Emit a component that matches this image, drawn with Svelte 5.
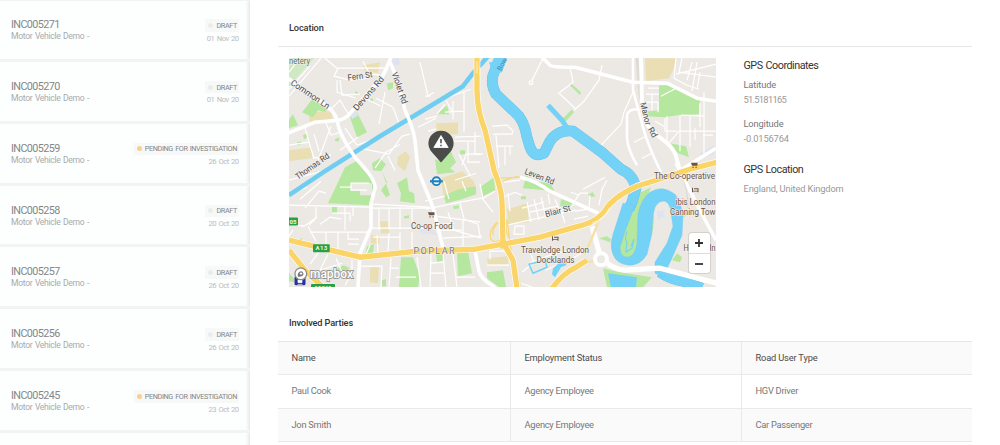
<script>
  const incidents = [
    { id: 'INC005271', status: 'DRAFT', date: '01 Nov 20' },
    { id: 'INC005270', status: 'DRAFT', date: '01 Nov 20' },
    { id: 'INC005259', status: 'PENDING FOR INVESTIGATION', date: '26 Oct 20' },
    { id: 'INC005258', status: 'DRAFT', date: '20 Oct 20' },
    { id: 'INC005257', status: 'DRAFT', date: '26 Oct 20' },
    { id: 'INC005256', status: 'DRAFT', date: '26 Oct 20' },
    { id: 'INC005245', status: 'PENDING FOR INVESTIGATION', date: '23 Oct 20' }
  ]

  const parties = [
    { name: 'Paul Cook', employment: 'Agency Employee', type: 'HGV Driver' },
    { name: 'Jon Smith', employment: 'Agency Employee', type: 'Car Passenger' }
  ]

  // map layers
  const parks = [
    'M302 112L313 98 323 105 328 108 325 112 318 110 313 117Z',
    'M289 119L293 114 298 125 289 128Z',
    'M350 117L357 112 367 132 357 137Z',
    'M387 83L393 82 393 88 388 90Z',
    'M297 142l4 -1v3l-4 1zM303 135l4 -2v4l-3 2zM335 139l4 -2v4l-4 0zM355 91l3 1v2l-3-1zM370 99l3-1v3h-3z',
    'M372 163L380 158 386 164 381 171 373 170Z',
    'M345 167L356 161 369 171 375 188 371 205 328 203 338 182Z',
    'M382 171L387 182 381 190 386 197 390 195ZM397 183L407 177 409 191 414 193 415 203 400 201 401 193Z',
    'M332 206h5v7h-5zM404 216l5-1v3h-5zM298 239l4-1v3h-4z',
    'M365 254L367 246 374 244 373 254Z',
    'M401 257L413 257 420 275 418 287 399 287Z',
    'M436 253L443 250 444 260 437 262ZM457 253L468 251 472 273 458 276Z',
    'M487 272L503 270 506 287 499 287 487 278Z',
    'M444 195L459 189 476 186 476 194 462 199 446 203Z',
    'M480 187L494 177 495 190 483 196Z',
    'M435 159L441 161 450 149 456 162 450 168 455 172 437 174Z',
    'M437 114L447 105 449 114ZM460 150l5 0v4h-5zM453 206l6-1v3l-5 1z',
    'M523 188L526 175 537 182 550 182 555 192 545 190Z',
    'M521 196l5 0v3h-5zM561 199L575 203 575 206 560 206Z',
    'M659 85L673 85 687 95 700 100 699 114 677 115 665 117 647 116 648 111 659 110Z',
    'M669 143L686 146 689 157 678 153Z',
    'M637 194L651 187 645 202 640 220 640 250 628 259 617 251 624 230Z',
    'M603 268L620 272 652 277 643 287 607 287Z',
    'M672 260L677 253 682 257 680 262ZM599 238l8-2 4 3-1 3zM588 194l5-2 2 4-5 1z',
    'M562 119L572 109 574 112 565 122ZM571 83l10 9-1 3-10-10z',
    'M651 212l3 5-1 12-4 9zM681 208l7 6-5 3zM289 273l5 5v4l-5-1z',
    'M331 271l13-6 6 3-8 4zM382 280l4-1v7h-4z'
  ]
  const sand = [
    'M308 112L332 111 332 121 310 124Z',
    'M363 65L380 62 378 73 364 71Z',
    'M289 150L312 147 312 158 289 161Z',
    'M398 156L406 151 410 157 405 171 397 165Z',
    'M436 123L458 122 458 134 437 134Z',
    'M441 178L462 171 474 181 475 187 458 190 444 200Z',
    'M507 209L527 203 529 222 508 224Z',
    'M487 258L508 256 508 264 488 265Z',
    'M380 221L389 221 389 233 381 233ZM371 235L380 236 379 244 371 243Z',
    'M370 267L379 267 378 283 370 282Z',
    'M645 58L676 58 673 70 669 78 646 81Z'
  ]
  const streets = [
    // north west
    'M289 96L321 58M289 89L310 66M300 58L289 72M325 58L337 68 389 68M338 68L334 76 350 80 368 78M340 80L342 95 360 94M337 80V92L356 98M363 61L369 73 383 76M420 62L428 96 434 92M332 108L340 100 348 113',
    'M289 145L309 142 314 158 331 155M309 142L305 128M314 134L319 151M331 126L317 163M325 120L331 135 340 132M345 128L357 145 378 137M357 145L368 141M340 150L358 137M360 148L389 154 402 136 410 134M375 168L386 152 400 144M395 170L388 156M418 127L436 118M385 92L379 124M376 98L393 107 399 123M365 98L381 106',
    // north centre
    'M434 102L471 89M437 114L445 104M464 91V132M453 101V119M445 112L464 111M446 100L452 111M425 119L437 116M428 131L436 129M425 96L430 96M475 132V154H483M455 137L481 136M459 154L470 175M468 142V162H480M492 126L507 125 513 131 512 134H493M496 135L499 168M505 146V165M496 146H513M475 141H454',
    'M462 165L466 154 480 154M510 155V146',
    // north east
    'M543 58L532 80M558 92L575 108M570 67L573 82 560 92M602 65L599 80 584 101 574 110M633 92L624 112 621 124 601 145M676 58L674 78 687 85 699 89M682 58L679 72 716 77M692 62L687 80M700 72L697 89M716 64L676 74M692 91L697 62',
    'M646 94H659M652 94V110M658 112V102H646M665 118V131H677M667 116V144M680 115V151M690 115V147M700 103V127M704 92V128M679 131H716M668 144L679 131M655 121L664 126M681 115L704 116V154M695 128V140M703 135H713M648 88H659M634 142L646 136M642 158L652 153M676 88L661 96',
    // west
    'M289 180L326 170M289 193L307 187M300 199L321 181M305 208L319 191 326 193M289 205L371 207M316 207V218L309 225M320 224L330 217 341 219M289 224L304 226 317 217M332 213L350 213 350 221M353 207V216M345 207V230M310 232H370M308 226L316 241M293 230L289 236M326 232V249M338 232V252M348 232V239H359M348 244H359M371 228H428M379 208V230M389 209V229M400 207V229M412 208V229M371 208H430M367 190H351V183H369M340 187H352M372 204L430 207',
    'M320 250L310 264M328 254L320 270 342 263M336 258L343 274 355 270M352 260V273L345 285M330 273H341M309 271L325 278M360 266H382L381 287M391 258L389 287M370 245L365 256M377 235L378 253M389 233L388 252M373 237H400M400 232V251M412 232V249M396 277H416M390 268H399M417 257L421 287M431 254L430 287M443 254L446 287M453 254L457 287M431 273H445M456 277H475M430 263L443 262',
    // centre
    'M426 209L460 202 482 198 493 212M425 201L445 196M444 181L449 199M462 181L466 191M480 184L483 198 495 191M455 180L476 173M460 203L464 219 478 224 480 236M436 216L480 222M448 212L454 230 481 238M437 230H462M433 225L454 223M443 238L482 236M463 220V246',
    'M504 182L520 180M503 197L515 192 522 195M510 211L508 193M527 202L531 222M534 199L539 220M541 197L546 218M548 194L550 204M555 199L560 211 576 204M515 226H524V234H514ZM507 225L575 210M530 212L558 206M575 211L588 209M522 208L544 202M560 207L565 223M574 219L588 216',
    'M528 247L534 262 522 272M530 262L550 255 571 250M508 251H490V259M487 265H509M521 283L533 287M545 270L557 265M573 258L589 248M583 189L605 177M572 205L580 193 588 193M589 208L590 195M599 205L602 189 607 180M579 195L571 192'
  ]
  const roads = [
    'M288 133L315 122 338 120Q346 119 351 112L382 77Q385 72 391 57',
    'M288 78L327 106Q337 114 338 124 340 135 355 157L368 172Q376 183 375 188L371 203V227L360 253 358 287',
    'M389 60Q396 73 405 110 413 127 415 140L418 170 433 207 443 248',
    'M475 250L479 271Q481 279 495 287',
    'M542 57L550 65Q552 67 575 67L633 82 667 83 697 98 716 101',
    'M520 177Q535 180 550 191L598 213',
    'M716 148L682 169M676 163L700 210 716 240'
  ]
  const yellowRoads = [
    'M289 240L360 257Q390 254 415 251L475 249 503 244 540 237 575 227Q598 222 606 209 613 197 637 186L690 169 717 162',
    'M477 57V90Q477 110 485 130L494 170Q502 190 502 202L503 242 513 260 517 288',
    'M289 250L305 270 323 287',
    'M552 288Q563 273 576 267L587 260'
  ]
  // the Lea, then its loops round the island
  const river = 'M500 57L495 70Q489 82 496 94L515 112Q524 119 527 137L530 147Q534 158 544 153L550 141Q558 129 573 131L603 153 621 169Q633 174 636 188L632 202 629 209M660 272Q670 279 683 281L702 288'
  const riverLoop = 'M623 203L613 234Q610 243 612 251 615 264 629 265 641 265 647 254L652 233Q652 216 655 207 659 200 665 201 670 203 671 212L673 226 667 243 655 262 655 273 664 277 668 266 671 260 682 235 683 215Q680 200 675 194 662 184 650 192 641 199 638 214L637 243Q635 256 628 257 620 257 620 247L625 231 635 205Z'
  const canal = 'M289 195L325 171 380 136 435 103 463 86 473 73 489 55'

  const labels = [
    { t: 'netery', x: 289, y: 64, w: 21, green: true },
    { t: 'Fern St', x: 348, y: 80.5, w: 25, r: -8 },
    { t: 'Common Ln', x: 290, y: 84, w: 45, r: 34 },
    { t: 'Devons Rd', x: 357, y: 111, w: 42, r: -49 },
    { t: 'Violet Rd', x: 391.5, y: 73, w: 33, r: 71 },
    { t: 'Thomas Rd', x: 298, y: 179.5, w: 39, r: -35 },
    { t: 'Leven Rd', x: 524, y: 173.5, w: 31, r: 21 },
    { t: 'Blair St', x: 546, y: 217, w: 26, r: -15 },
    { t: 'Manor', x: 640, y: 103, w: 23, r: 76 },
    { t: 'Rd', x: 647.5, y: 129, w: 10.5, r: 60 },
    { t: 'The Co-operative', x: 654, y: 179, w: 61, brown: true },
    { t: 'ibis London', x: 675.5, y: 204.7, w: 40, brown: true },
    { t: 'Canning Tow', x: 670, y: 214.9, w: 45.5, brown: true },
    { t: 'Holiday In', x: 683.5, y: 251.2, w: 32, brown: true },
    { t: 'Travelodge London', x: 521, y: 253.2, w: 68, brown: true },
    { t: 'Docklands', x: 536.5, y: 263, w: 38, brown: true },
    { t: 'Co-op Food', x: 411, y: 229, w: 41.5, brown: true }
  ]
</script>

<div class="page">
  <aside class="incidents">
    {#each incidents as inc}
      <div class="incident">
        <div class="info">
          <div class="id">{inc.id}</div>
          <div class="desc">Motor Vehicle Demo -</div>
        </div>
        <div class="meta">
          <div class="badge">
            <span class="dot" class:pending={inc.status !== 'DRAFT'}></span>{inc.status}
          </div>
          <div class="date">{inc.date}</div>
        </div>
      </div>
    {/each}
  </aside>

  <main>
    <h2 class="location-title">Location</h2>
    <div class="location">
      <div class="map">
        <svg width="427" height="229" viewBox="289 57.8 427 229">
          <rect x="289" y="57" width="427" height="231" fill="#ece9e5" />
          <path d="M289 57H315L289 86Z" fill="#cfe9c3" />
          {#each sand as d}<path {d} fill="#eadfb4" />{/each}
          {#each parks as d}<path {d} fill="#b5e79f" />{/each}
          <path d="M351 183H372V195H360V190H351Z" fill="#ece9e5" />
          <path d="M389 58h10l1 6-9 2zM350 113l5-4 3 6-6 4zM657 211l8-1-2 4 3 3-5 0-2 4-2-4zM700 153l14-8v9l-12 3zM418 228l14 1 6 6-16-2z" fill="#dfe2ef" />

          <g fill="none" stroke-linejoin="round">
            {#each streets as d}<path {d} stroke="#fff" stroke-width="1.2" />{/each}
            <path d={canal} stroke="#6fcdf2" stroke-width="4.6" />
            <path d={river} stroke="#6ab9e6" stroke-width="10.8" />
            <path d={river} stroke="#74d2f7" stroke-width="10.2" />
            <path d={riverLoop} fill="#74d2f7" stroke="#6fc4ee" stroke-width=".4" />
            <path d="M548 105L562 120 569 131" stroke="#74d2f7" stroke-width="5" />
            <path d="M529 264l16-4 2 7-14 6z" stroke="#74d2f7" stroke-width="1.6" />
            <path d="M627 231q-3 7 0 11l-1 10 6-4 2-9-3 7" stroke="#74d2f7" stroke-width="1.1" />
          </g>
          <path d="M489 62h6l3-4h9l-5 14-9 1zM553 268l8-7 6-2-1 6-5 2-6 10-3-3zM608 273l29 4-1 10H611z" fill="#74d2f7" />

          <g fill="none" stroke-linejoin="round">
            <path d="M633 57V90L642 123Q646 141 661 172M637 165Q628 150 627 138V115Q628 109 637 109" stroke="#fff" stroke-width="2.6" />
            <path d="M637 57L640 95 649 130" stroke="#dedad6" stroke-width="3" />
            <path d="M641 57L642 103Q643 120 651 130L666 142Q675 149 677 160L680 170" stroke="#fff" stroke-width="4" />
            {#each roads as d}<path {d} stroke="#fff" stroke-width="3.6" />{/each}
            <path d="M592 226L600 255M605 261Q613 269 625 270L660 268 717 283" stroke="#fff" stroke-width="5.2" />
            <path d="M599 219Q593 238 584 254M583 264L602 258" stroke="#f7dfa6" stroke-width="2.4" />
            <path d="M681 175Q688 187 688 208" stroke="#d5d0ca" stroke-width=".8" />
            <path d="M497 222Q488 231 491 239 496 245 502 237M498 222Q492 229 493 235M507 220Q504 233 510 238M500 178L520 177M503 181Q510 178 518 176M507 219L511 250 520 285" stroke="#f9d77d" stroke-width="1.3" />
            {#each yellowRoads as d}<path {d} stroke="#fff" stroke-width="6.6" />{/each}
            {#each yellowRoads as d}<path {d} stroke="#fbd467" stroke-width="5.4" />{/each}
            <path d="M477 61v12M480 67v8M592 223Q604 219 610 207" stroke="#fff6d8" stroke-width=".9" />
          </g>
          <circle cx="503" cy="244" r="4.5" fill="#fbd467" />
          <circle cx="601" cy="259" r="6" fill="#ece9e5" stroke="#fff" stroke-width="4" />
          <circle cx="531" cy="82.5" r="1.8" fill="#ece9e5" stroke="#fff" stroke-width="1.3" />

          {#each labels as l}
            <text
              class="label"
              class:brown={l.brown}
              class:green={l.green}
              textLength={l.w}
              lengthAdjust="spacingAndGlyphs"
              transform="translate({l.x} {l.y}) rotate({l.r || 0})">{l.t}</text>
          {/each}
          <text class="water" transform="translate(501 71) rotate(-62)">Bow</text>
          <text class="district" x="413.5" y="254" textLength="41">POPLAR</text>

          <!-- shops, hotels -->
          <g fill="#6b5445">
            <path d="M428 212h6.5v3h-5.5zM429.5 216h1.2v1.2h-1.2zM432.5 216h1.2v1.2h-1.2zM691 162.5h6.5v3h-5.5zM692.5 166.5h1.2v1.2h-1.2zM695.5 166.5h1.2v1.2h-1.2z" />
            <path d="M552 236h1v3h4.500v-1.500h-3.500v-1h4.500v4h-1v-.7h-4.500v.7h-1zM692 187.500h1v3h4.500v-1.500h-3.500v-1h4.500v4h-1v-.7h-4.500v.7h-1z" />
          </g>
          <circle cx="436.4" cy="181" r="3.9" fill="#fff" stroke="#1f83bd" stroke-width="1.9" />
          <rect x="430" y="180" width="12.8" height="2.2" fill="#1f83bd" />

          <!-- road shields -->
          <rect x="286" y="217.3" width="12" height="8" rx="1" fill="#27a04b" />
          <text class="shield" x="289.5" y="223.6">05</text>
          <rect x="313" y="244" width="16.7" height="8" rx="1" fill="#27a04b" />
          <text class="shield" x="315.6" y="250.3" textLength="11.5">A13</text>
          <rect x="311" y="283.8" width="24" height="8" rx="1" fill="#27a04b" />
          <text class="shield" x="314" y="290.3">A1261</text>

          <!-- station + map logo -->
          <rect x="294.5" y="276" width="11" height="9" rx="1.5" fill="#29349a" />
          <path d="M298 279.5h4v3h-4zM297.5 284.5h5" fill="#fff" stroke="#fff" stroke-width=".7" />
          <circle cx="300.8" cy="273.6" r="5.9" fill="#fff" stroke="#8b8b8b" stroke-width="1.3" />
          <path d="M298 276.5q-1-3.500 1.500-5 2.300-1 3.500.7 1.300 2.200-.8 3.600-1.700 1-4.200.7z" fill="#777" />
          <path d="M301 271.5l.6 1.300 1.300.5-1.300.6-.6 1.300-.6-1.300-1.200-.6 1.200-.5z" fill="#fff" />
          <text class="logo" x="310" y="277.7" textLength="43" lengthAdjust="spacingAndGlyphs">mapbox</text>

          <!-- incident pin -->
          <path d="M441 162.3L431.5 151.5A12.6 12.6 0 1 1 450.5 151.5Z" fill="#4b4b4b" />
          <path d="M441 135.3L448.2 147.3H433.8Z" fill="#fff" stroke="#fff" stroke-width=".8" stroke-linejoin="round" />
          <path d="M441 138.8v4.3M441 144.6v1.5" stroke="#4b4b4b" stroke-width="1.5" />
        </svg>
        <div class="zoom">
          <button aria-label="Zoom in"><svg width="8" height="8" viewBox="0 0 8 8"><path d="M4 0V8M0 4H8" /></svg></button>
          <button aria-label="Zoom out"><svg width="8" height="8" viewBox="0 0 8 8"><path d="M0 4H8" /></svg></button>
        </div>
      </div>

      <div class="gps">
        <h3>GPS Coordinates</h3>
        <div class="key">Latitude</div>
        <div class="value lat">51.5181165</div>
        <div class="key">Longitude</div>
        <div class="value lng">-0.0156764</div>
        <h3 class="place-title">GPS Location</h3>
        <div class="value place">England, United Kingdom</div>
      </div>
    </div>

    <h2 class="parties-title">Involved Parties</h2>
    <div class="table">
      <div class="row head">
        <span>Name</span><span>Employment Status</span><span>Road User Type</span>
      </div>
      {#each parties as p}
        <div class="row">
          <span>{p.name}</span><span>{p.employment}</span><span>{p.type}</span>
        </div>
      {/each}
    </div>
  </main>
</div>

<style>
  :global(body) {
    background: #fff;
    overflow: hidden;
  }
  .page {
    display: flex;
    width: 1000px;
    height: 445px;
    overflow: hidden;
    font-family: Roboto, "Liberation Sans", sans-serif;
  }
  h2, h3 { margin: 0; font-weight: 500; }

  .incidents {
    width: 250px;
    height: 445px;
    box-sizing: border-box;
    flex-shrink: 0;
    overflow: hidden;
    background: #fdfefe;
    box-shadow: inset -4px 0 4px -3px #dcdede;
  }
  .incident {
    display: flex;
    justify-content: space-between;
    height: 61.85px;
    box-sizing: border-box;
    padding: 19px 11.5px 0 11px;
    border-bottom: 3px solid #f2f4f4;
    white-space: nowrap;
  }
  .incident:first-child { box-shadow: inset 0 1px #f2f4f4; }
  .id {
    color: #858787;
    font-size: 10.8px;
    line-height: 12px;
    letter-spacing: -0.6px;
  }
  .desc {
    color: #a9abab;
    font-size: 8.6px;
    line-height: 11px;
    letter-spacing: -0.3px;
    word-spacing: 0.6px;
  }
  .meta {
    display: flex;
    flex-direction: column;
    align-items: flex-end;
  }
  .badge {
    display: flex;
    align-items: center;
    height: 12.5px;
    padding: 0 1.5px 0 3px;
    background: #f7f8f8;
    color: #858787;
    font-size: 7.3px;
    letter-spacing: -0.4px;
    word-spacing: 0.8px;
  }
  .dot {
    width: 5px;
    height: 5px;
    margin-right: 3px;
    border-radius: 50%;
    background: #ebecec;
  }
  .dot.pending { background: #f9d08e; }
  .date {
    color: #bbbdbd;
    font-size: 7.7px;
    line-height: 13px;
    letter-spacing: -0.55px;
    word-spacing: 1px;
  }

  main {
    width: 693.5px;
    padding-left: 28px;
  }
  .location-title, .parties-title {
    padding-left: 11px;
    color: #333;
    font-size: 9.2px;
    line-height: 12px;
    letter-spacing: -0.12px;
  }
  .location-title {
    padding-top: 22px;
    height: 24px;
    border-bottom: 1px solid #e6e6e6;
  }
  .location {
    display: flex;
    padding: 11px 0 0 11px;
  }
  .map {
    position: relative;
    width: 427px;
    height: 229px;
    overflow: hidden;
  }
  .map > svg { display: block; }
  .label {
    font-size: 8.6px;
    font-weight: 400;
    fill: #4e4c4a;
    stroke: #f4f2f0;
    stroke-width: 1.2px;
    paint-order: stroke;
  }
  .label.brown { fill: #6b5445; }
  .label.green { fill: #56744f; }
  .water { font-size: 7px; fill: #4589b3; }
  .district {
    font-size: 9px;
    fill: #77777f;
    stroke: #f4f2f0;
    stroke-width: 1px;
    paint-order: stroke;
  }
  .shield { font-size: 6px; font-weight: 700; fill: #f4fbd0; }
  .logo {
    font-size: 12.5px;
    font-weight: 500;
    fill: #fff;
    stroke: #969696;
    stroke-width: 1.8px;
    paint-order: stroke;
  }
  .zoom {
    position: absolute;
    right: 6.5px;
    bottom: 14px;
    width: 20.5px;
    border-radius: 3px;
    background: #fff;
    box-shadow: 0 0 0 1px rgba(0, 0, 0, 0.1);
  }
  .zoom button {
    display: flex;
    align-items: center;
    justify-content: center;
    width: 100%;
    height: 20px;
    padding: 0;
    border: 0;
    background: none;
  }
  .zoom button + button { border-top: 1px solid #ddd; }
  .zoom path { stroke: #333; stroke-width: 1.8; }

  .gps {
    padding-left: 27.5px;
    white-space: nowrap;
  }
  h3 {
    color: #333;
    font-size: 10.8px;
    font-weight: 400;
    line-height: 16px;
    letter-spacing: -0.5px;
    word-spacing: 0.8px;
  }
  .key, .value {
    font-size: 9.3px;
    line-height: 14px;
    letter-spacing: -0.15px;
  }
  .key { color: #777; padding-top: 4px; }
  .value { color: #999; padding-top: 1px; }
  .lat {
    padding-bottom: 6px;
    letter-spacing: -0.7px;
  }
  .place-title { padding-top: 15.5px; }
  .place { padding-top: 4.5px; }

  .parties-title {
    padding-top: 30px;
    height: 24px;
  }
  .table { border-top: 1px solid #e6e6e6; }
  .row {
    display: grid;
    grid-template-columns: 232px 231px 1fr;
    height: 33.3px;
    box-sizing: border-box;
    border-bottom: 1px solid #e9e9e9;
    color: #777;
    font-size: 9.3px;
    line-height: 31px;
    letter-spacing: -0.27px;
  }
  .row:nth-child(odd) { background: #fafafa; }
  .row span { padding-left: 13.5px; }
  .row span + span { border-left: 1px solid #e9e9e9; }
  .row.head {
    color: #4c4c4c;
    line-height: 32px;
    letter-spacing: -0.18px;
  }
</style>
